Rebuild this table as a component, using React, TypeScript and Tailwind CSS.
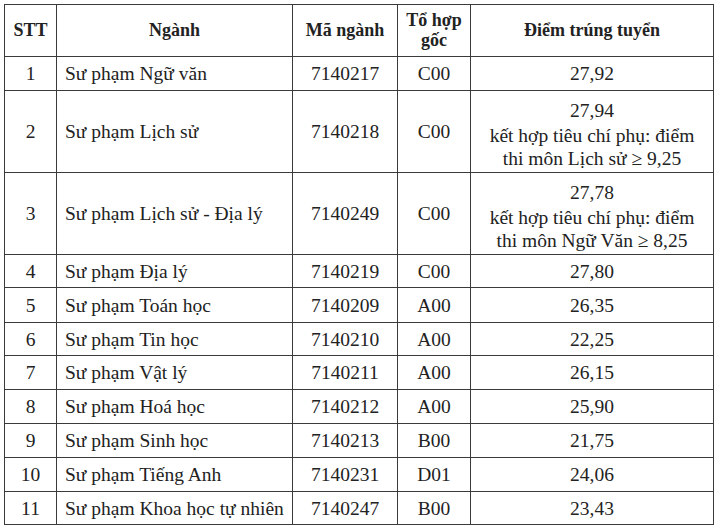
const rows: { stt: string; nganh: string; ma: string; to: string; diem: string[]; h: string }[] = [
  { stt: "1", nganh: "Sư phạm Ngữ văn", ma: "7140217", to: "C00", diem: ["27,92"], h: "h-[34px]" },
  {
    stt: "2",
    nganh: "Sư phạm Lịch sử",
    ma: "7140218",
    to: "C00",
    diem: ["27,94", "kết hợp tiêu chí phụ: điểm", "thi môn Lịch sử ≥ 9,25"],
    h: "h-[82px]",
  },
  {
    stt: "3",
    nganh: "Sư phạm Lịch sử - Địa lý",
    ma: "7140249",
    to: "C00",
    diem: ["27,78", "kết hợp tiêu chí phụ: điểm", "thi môn Ngữ Văn ≥ 8,25"],
    h: "h-[82px]",
  },
  { stt: "4", nganh: "Sư phạm Địa lý", ma: "7140219", to: "C00", diem: ["27,80"], h: "h-[33px]" },
  { stt: "5", nganh: "Sư phạm Toán học", ma: "7140209", to: "A00", diem: ["26,35"], h: "h-[35px]" },
  { stt: "6", nganh: "Sư phạm Tin học", ma: "7140210", to: "A00", diem: ["22,25"], h: "h-[33px]" },
  { stt: "7", nganh: "Sư phạm Vật lý", ma: "7140211", to: "A00", diem: ["26,15"], h: "h-[34px]" },
  { stt: "8", nganh: "Sư phạm Hoá học", ma: "7140212", to: "A00", diem: ["25,90"], h: "h-[34px]" },
  { stt: "9", nganh: "Sư phạm Sinh học", ma: "7140213", to: "B00", diem: ["21,75"], h: "h-[34px]" },
  { stt: "10", nganh: "Sư phạm Tiếng Anh", ma: "7140231", to: "D01", diem: ["24,06"], h: "h-[34px]" },
  { stt: "11", nganh: "Sư phạm Khoa học tự nhiên", ma: "7140247", to: "B00", diem: ["23,43"], h: "h-[33px]" },
];

const cell = "border-[1.5px] border-[#3a3a3a] p-0 align-middle";

export default function App() {
  return (
    <div className="w-[720px] h-[532px] bg-white pl-[4px] pt-[4px] text-[#222] font-['Liberation_Serif','Times_New_Roman',serif]">
      <table className="border-collapse table-fixed w-[709px] text-[19.5px] leading-[23px]">
        <colgroup>
          <col className="w-[52px]" />
          <col className="w-[236px]" />
          <col className="w-[105px]" />
          <col className="w-[73px]" />
          <col className="w-[243px]" />
        </colgroup>
        <thead>
          <tr className="h-[52px] font-bold text-[18px]">
            <th className={`${cell} text-center`}>STT</th>
            <th className={`${cell} text-center`}>Ngành</th>
            <th className={`${cell} text-center`}>Mã ngành</th>
            <th className={`${cell} text-center leading-[20px] pb-[2px]`}>
              Tổ hợp
              <br />
              gốc
            </th>
            <th className={`${cell} text-center`}>Điểm trúng tuyển</th>
          </tr>
        </thead>
        <tbody>
          {rows.map((r) => (
            <tr key={r.stt} className={r.h}>
              <td className={`${cell} text-center`}>{r.stt}</td>
              <td className={`${cell} text-left pl-[8px] whitespace-nowrap`}>{r.nganh}</td>
              <td className={`${cell} text-center`}>{r.ma}</td>
              <td className={`${cell} text-center`}>{r.to}</td>
              <td className={`${cell} text-center ${r.diem.length > 1 ? "pt-[6px]" : ""}`}>
                {r.diem.map((d, i) => (
                  <div key={d} className={i === 0 && r.diem.length > 1 ? "mb-[2px]" : ""}>
                    {d}
                  </div>
                ))}
              </td>
            </tr>
          ))}
        </tbody>
      </table>
    </div>
  );
}
